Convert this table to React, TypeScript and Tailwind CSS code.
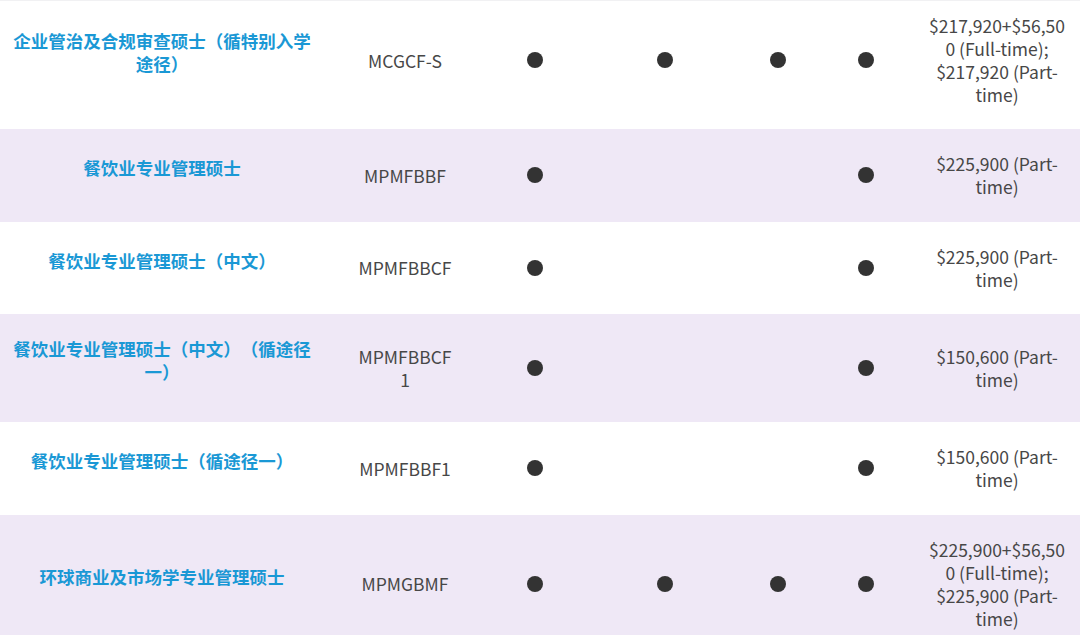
import React from "react";

type Row = {
  name: string;
  code: string;
  dots: boolean[];
  fee: string;
  shade: boolean;
};

const rows: Row[] = [
  {
    name: "企业管治及合规审查硕士（循特别入学途径）",
    code: "MCGCF-S",
    dots: [true, true, true, true],
    fee: "$217,920+$56,500 (Full-time); $217,920 (Part-time)",
    shade: false,
  },
  {
    name: "餐饮业专业管理硕士",
    code: "MPMFBBF",
    dots: [true, false, false, true],
    fee: "$225,900 (Part-time)",
    shade: true,
  },
  {
    name: "餐饮业专业管理硕士（中文）",
    code: "MPMFBBCF",
    dots: [true, false, false, true],
    fee: "$225,900 (Part-time)",
    shade: false,
  },
  {
    name: "餐饮业专业管理硕士（中文）（循途径一）",
    code: "MPMFBBCF1",
    dots: [true, false, false, true],
    fee: "$150,600 (Part-time)",
    shade: true,
  },
  {
    name: "餐饮业专业管理硕士（循途径一）",
    code: "MPMFBBF1",
    dots: [true, false, false, true],
    fee: "$150,600 (Part-time)",
    shade: false,
  },
  {
    name: "环球商业及市场学专业管理硕士",
    code: "MPMGBMF",
    dots: [true, true, true, true],
    fee: "$225,900+$56,500 (Full-time); $225,900 (Part-time)",
    shade: true,
  },
];

const Dot = ({ on }: { on: boolean }) =>
  on ? <span className="block w-[16px] h-[16px] rounded-full bg-[#333333]" /> : null;

export default function App() {
  return (
    <div
      className="w-[1080px] h-[635px] overflow-hidden bg-white border-t border-[#f1f1f3] text-[17.5px] leading-[23px] text-[#474747] [text-spacing-trim:space-all]"
      style={{ fontFamily: '"Noto Sans CJK SC", "Noto Sans", sans-serif' }}
    >
      {rows.map((r, i) => (
        <div
          key={i}
          className={`grid grid-cols-[324px_162px_98px_162px_64px_112px_158px] items-center ${
            r.shade ? "bg-[#efe8f6]" : "bg-white"
          } ${i === 0 ? "pt-[13px] pb-[23px]" : "py-[23.25px]"}`}
        >
          <div className="px-[12px] text-center">
            <div className="mb-[15.5px] font-bold text-[#1a98d5] [text-spacing-trim:space-all]">{r.name}</div>
          </div>
          <div className="px-[33px] text-center break-words">{r.code}</div>
          {r.dots.map((d, j) => (
            <div key={j} className="flex justify-center items-center">
              <Dot on={d} />
            </div>
          ))}
          <div className="pl-[5px] pr-[13px] text-center break-words">{r.fee}</div>
        </div>
      ))}
    </div>
  );
}
